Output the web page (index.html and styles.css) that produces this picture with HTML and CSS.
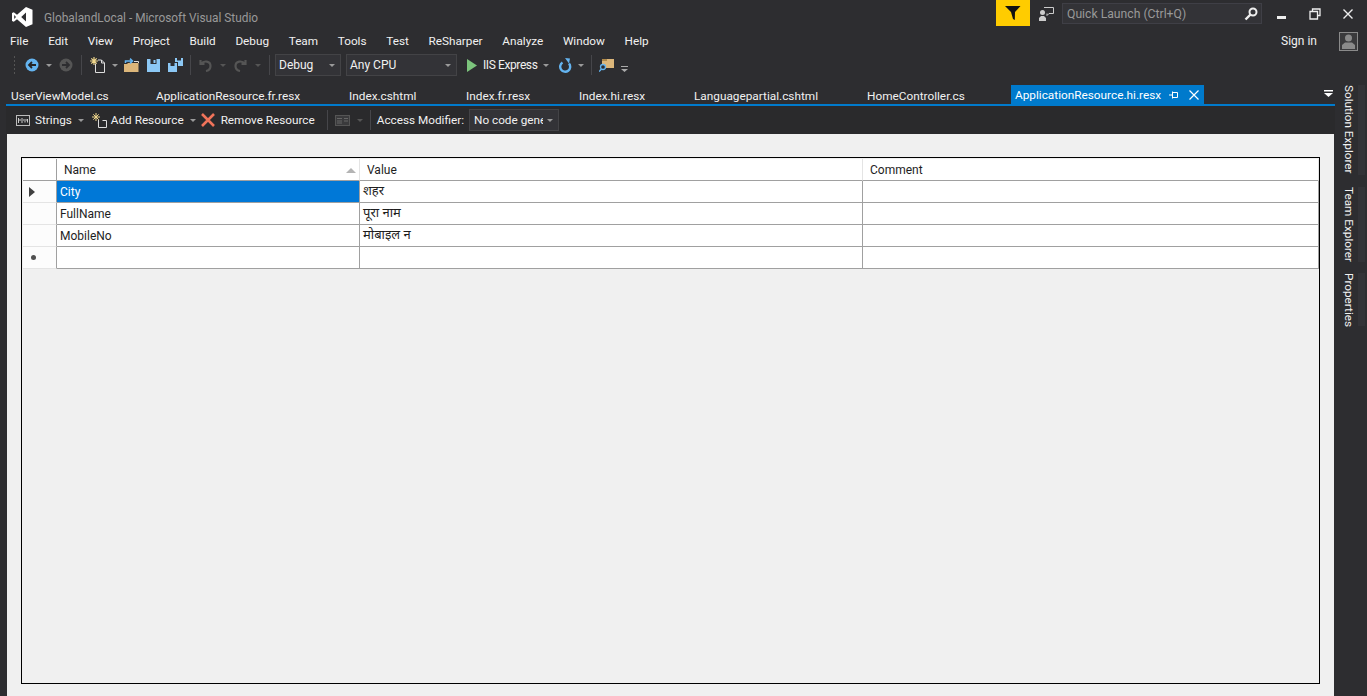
FILE: index.html
```html
<!DOCTYPE html>
<html lang="en">
<head>
<meta charset="utf-8">
<title>GlobalandLocal - Microsoft Visual Studio</title>
<link rel="stylesheet" href="styles.css">
</head>
<body>
<div class="app">
  <header class="titlebar">
    <svg class="logo" width="21" height="20" viewBox="0 0 21 20"><path fill="#fff" d="M14 0l6.500 2.800v14.400L14 20 5 12.300 1.800 14.800 0 13.900V6.100l1.800-.9L5 7.700zM14 5.400L9.200 10l4.800 4.600zM2.200 8v4L4 10z"/></svg>
    <span class="app-title">GlobalandLocal - Microsoft Visual Studio</span>
    <div class="title-right">
      <div class="filter-btn"><svg width="16" height="16" viewBox="0 0 16 16"><path fill="#111" d="M0 1h15.500L10 7l-.2 8L8 14 6 7z"/></svg></div>
      <svg class="feedback" width="16" height="16" viewBox="0 0 16 16"><circle cx="4.500" cy="6.500" r="2.500" fill="#ccc"/><path fill="#ccc" d="M1 15v-3l2-2h3l2 2v3z"/><path fill="none" stroke="#ccc" d="M6 1.500h9.500v6H11l-2 2v-2"/></svg>
      <div class="quick">
        <span>Quick Launch (Ctrl+Q)</span>
        <svg width="14" height="14" viewBox="0 0 14 14"><circle cx="9" cy="5" r="3.500" fill="none" stroke="#eee" stroke-width="2"/><path stroke="#eee" stroke-width="2.400" d="M6.500 7.500L1.500 12.500"/></svg>
      </div>
      <div class="win-btns">
        <svg width="12" height="12" viewBox="0 0 12 12"><rect x="1" y="8" width="9" height="3" fill="#eee"/></svg>
        <svg width="12" height="12" viewBox="0 0 12 12"><path fill="none" stroke="#eee" stroke-width="1.300" d="M3.500 3V1h7.500v6.500H8.500M1 3.500h7.500V11H1z"/></svg>
        <svg width="12" height="12" viewBox="0 0 12 12"><path stroke="#eee" stroke-width="1.400" d="M1.500 1.500l9 9M10.500 1.500l-9 9"/></svg>
      </div>
    </div>
  </header>

  <nav class="menubar">
    <span>File</span><span>Edit</span><span>View</span><span>Project</span><span>Build</span><span>Debug</span><span>Team</span><span>Tools</span><span>Test</span><span>ReSharper</span><span>Analyze</span><span>Window</span><span>Help</span>
    <div class="signin">
      <span>Sign in</span>
      <div class="avatar"><svg width="17" height="17" viewBox="0 0 17 17"><circle cx="8.500" cy="5" r="3.500" fill="#8a8a8a"/><path fill="#8a8a8a" d="M2 16v-4l3-2.500h7l3 2.500v4z"/></svg></div>
    </div>
  </nav>

  <div class="toolbar">
    <div class="grip"></div>
    <svg class="ic-back" width="14" height="14" viewBox="0 0 14 14"><circle cx="7" cy="7" r="6.500" fill="#64b4f0"/><path fill="none" stroke="#252526" stroke-width="1.800" d="M11 7H4.500M7 4L4 7l3 3"/></svg>
    <i class="caret"></i>
    <svg class="ic-fwd" width="14" height="14" viewBox="0 0 14 14"><circle cx="7" cy="7" r="6.500" fill="#555"/><path fill="none" stroke="#2d2d30" stroke-width="1.800" d="M3 7h6.500M7 4l3 3-3 3"/></svg>
    <div class="sep s1"></div>
    <svg class="ic-new" width="15" height="16" viewBox="0 0 15 16"><path fill="none" stroke="#ddd" d="M5.500 6.500v9h9V6l-3-3H8M11.500 3v3h3"/><path stroke="#f0d78c" stroke-width="1.200" d="M4 0v8M0 4h8M1.300 1.300l5.400 5.400M6.700 1.300L1.300 6.700"/></svg>
    <i class="caret"></i>
    <svg class="ic-open" width="15" height="14" viewBox="0 0 15 14"><path fill="#dcb67a" d="M0 6h3l1-1h10.500v9H0z"/><path fill="none" stroke="#64b4f0" stroke-width="1.500" d="M1.500 5V3h6M6 .6L8.500 3 6 5.400"/><path fill="none" stroke="#ddd" d="M10 3.500h4.500V5"/></svg>
    <svg class="ic-save" width="13" height="13" viewBox="0 0 13 13"><path fill="#8cc8f5" d="M0 0h13v13H0z"/><path fill="#2d2d30" d="M3.500 0h6v5h-6z"/><path fill="#8cc8f5" d="M6.500 1h2v3h-2z"/></svg>
    <svg class="ic-saveall" width="15" height="14" viewBox="0 0 15 14"><path fill="#8cc8f5" d="M0 5h9v9H0z"/><path fill="#2d2d30" d="M2.500 5h4v3h-4z"/><path fill="#8cc8f5" d="M7 0h8v8h-5V4H7z"/><path fill="#2d2d30" d="M9 0h4v2.500H9z"/></svg>
    <div class="sep s2"></div>
    <svg class="ic-undo" width="13" height="14" viewBox="0 0 13 14"><path fill="none" stroke="#555" stroke-width="2.200" d="M1.500 2v4h4M2 6c3-4 9.500-3 9.500 2 0 3-2 4.500-4.500 5"/></svg>
    <i class="caret dim"></i>
    <svg class="ic-redo" width="13" height="14" viewBox="0 0 13 14"><path fill="none" stroke="#555" stroke-width="2.200" d="M11.500 2v4h-4M11 6C8 2 1.500 3 1.500 8c0 3 2 4.500 4.500 5"/></svg>
    <i class="caret dim"></i>
    <div class="sep s3"></div>
    <div class="combo debug"><span>Debug</span><i class="caret"></i></div>
    <div class="combo cpu"><span>Any CPU</span><i class="caret"></i></div>
    <svg class="ic-play" width="10" height="13" viewBox="0 0 10 13"><path fill="#7cc47c" d="M0 0l10 6.500L0 13z"/></svg>
    <span class="tb-label">IIS Express</span>
    <i class="caret"></i>
    <svg class="ic-refresh" width="14" height="15" viewBox="0 0 14 15"><path fill="none" stroke="#64b4f0" stroke-width="2.400" d="M4.500 4.500A5 5 0 1 0 11 5.500"/><path fill="#64b4f0" d="M7 0l5 .5-1 5z"/></svg>
    <i class="caret"></i>
    <div class="sep s4"></div>
    <svg class="ic-find" width="15" height="14" viewBox="0 0 15 14"><path fill="#dcb67a" d="M3 1h12v9H7L3 6z"/><path fill="#b08a4a" d="M3 1h5v2H3z"/><circle cx="4" cy="9" r="2.500" fill="#2d2d30" stroke="#64b4f0" stroke-width="1.300"/><path stroke="#64b4f0" stroke-width="1.500" d="M2.500 11L0 13.500"/></svg>
    <svg class="ic-more" width="7" height="6" viewBox="0 0 7 6"><path fill="#aaa" d="M0 0h7v1H0zM0 3h7L3.500 6z"/></svg>
  </div>

  <div class="workspace">
    <div class="left">
      <div class="tabs">
        <span>UserViewModel.cs</span><span>ApplicationResource.fr.resx</span><span>Index.cshtml</span><span>Index.fr.resx</span><span>Index.hi.resx</span><span>Languagepartial.cshtml</span><span>HomeController.cs</span>
        <div class="tab-active">
          <span>ApplicationResource.hi.resx</span>
          <svg class="pin" width="10" height="9" viewBox="0 0 10 9"><path fill="none" stroke="#fff" d="M3.500 1.500h5v5h-5zM3.500 .5v7M0 4h3.500"/></svg>
          <svg class="tab-close" width="10" height="10" viewBox="0 0 10 10"><path stroke="#fff" stroke-width="1.200" d="M.5 .5l9 9M9.500 .5l-9 9"/></svg>
        </div>
        <svg class="tab-menu" width="9" height="7" viewBox="0 0 9 7"><path fill="#fff" d="M0 0h9v1.500H0zM0 3h9L4.500 7z"/></svg>
      </div>
      <main class="doc">
        <div class="doc-toolbar">
          <svg class="ic-abc" width="14" height="11" viewBox="0 0 14 11"><rect x=".5" y=".5" width="13" height="10" fill="none" stroke="#bbb"/><path stroke="#ccc" d="M2.500 3v5M6 3v5M9 4v3.500M11.500 4v3.500M3 5h2M7 5h1M10 5h1"/></svg>
          <span class="dt-label">Strings</span>
          <i class="caret"></i>
          <svg class="ic-add" width="15" height="15" viewBox="0 0 15 15"><path fill="none" stroke="#ddd" d="M6.500 6.500v8h8V7.500h-4"/><path stroke="#f0d78c" d="M4 0v8M0 4h8M1.300 1.300l5.400 5.400M6.700 1.300L1.300 6.700"/></svg>
          <span class="dt-label">Add Resource</span>
          <i class="caret"></i>
          <svg class="ic-remove" width="14" height="14" viewBox="0 0 14 14"><path stroke="#f0735a" stroke-width="2.600" d="M1 1l12 12M13 1L1 13"/></svg>
          <span class="dt-label">Remove Resource</span>
          <div class="sep s5"></div>
          <svg class="ic-view" width="15" height="11" viewBox="0 0 15 11"><rect x=".5" y=".5" width="14" height="10" fill="#3a3a3c" stroke="#555"/><path stroke="#666" d="M2 3.500h5M9 3.500h4M2 6h5M9 6h4M2 8h5"/></svg>
          <i class="caret dim"></i>
          <div class="sep s6"></div>
          <span class="dt-label access">Access Modifier:</span>
          <div class="combo code"><span class="clip">No code generation</span><i class="caret"></i></div>
        </div>
        <div class="content">
          <div class="grid-frame">
            <div class="grid">
              <div class="cell rowh head"></div>
              <div class="cell head name-head"><span>Name</span><i class="sort"></i></div>
              <div class="cell head">Value</div>
              <div class="cell head">Comment</div>

              <div class="cell rowh"><i class="row-arrow"></i></div>
              <div class="cell sel">City</div>
              <div class="cell hi">शहर</div>
              <div class="cell"></div>

              <div class="cell rowh"></div>
              <div class="cell">FullName</div>
              <div class="cell hi">पूरा नाम</div>
              <div class="cell"></div>

              <div class="cell rowh"></div>
              <div class="cell">MobileNo</div>
              <div class="cell hi">मोबाइल न</div>
              <div class="cell"></div>

              <div class="cell rowh"><i class="row-new"></i></div>
              <div class="cell"></div>
              <div class="cell"></div>
              <div class="cell"></div>
            </div>
          </div>
        </div>
      </main>
    </div>
    <aside class="rail">
      <div class="rail-tab solution">Solution Explorer</div>
      <div class="rail-tab team">Team Explorer</div>
      <div class="rail-tab props">Properties</div>
    </aside>
  </div>
</div>
</body>
</html>
```

FILE: styles.css
```css
* { box-sizing: border-box; }
html, body { margin: 0; height: 100%; overflow: hidden; }
body { background: #2d2d30; color: #f1f1f1; font: 12px/16px Roboto, "Noto Sans", "Noto Sans Devanagari", sans-serif; }
.app { height: 696px; display: flex; flex-direction: column; }
svg { display: block; flex: none; }

.titlebar { height: 28px; display: flex; align-items: flex-start; flex: none; }
.logo { margin: 7px 0 0 12px; }
.app-title { margin: 10px 0 0 11px; color: #999; font-size: 11.85px; }
.title-right { margin-left: auto; display: flex; align-items: flex-start; }
.filter-btn { width: 34px; height: 26px; background: #ffcc00; display: flex; align-items: center; justify-content: center; }
.feedback { margin: 6px 0 0 8px; }
.quick { width: 200px; height: 21px; margin: 3px 0 0 8px; padding: 0 3px 0 4px; background: #333337; border: 1px solid #3f3f46; display: flex; align-items: center; justify-content: space-between; color: #999; font-size: 12.2px; }
.win-btns { display: flex; gap: 21px; margin: 8px 0 0 14px; padding-right: 13px; }

.menubar { height: 26px; display: flex; align-items: center; gap: 19.7px; padding-left: 10px; flex: none; font-size: 11.75px; }
.signin { margin-left: auto; display: flex; align-items: center; gap: 22px; padding-right: 9px; font-size: 12px; }
.avatar { width: 19px; height: 19px; border: 1px solid #8a8a8a; background: #3a3a3c; display: flex; align-items: flex-end; justify-content: center; }

.toolbar { height: 22px; display: flex; align-items: center; flex: none; padding-left: 13px; }
.grip { width: 3px; height: 20px; background-image: radial-gradient(#555 .6px, transparent .7px); background-size: 3px 4px; }
.caret { display: block; flex: none; width: 0; height: 0; border: 3px solid transparent; border-top-color: #9a9a9a; border-bottom: 0; }
.caret.dim { border-top-color: #555; }
.sep { width: 1px; height: 20px; background: #46464a; flex: none; }
.ic-back { margin-left: 9px; }
.ic-back + .caret { margin-left: 7px; }
.ic-fwd { margin-left: 7px; }
.s1 { margin-left: 8px; }
.ic-new { margin-left: 8px; }
.ic-new + .caret { margin-left: 7px; }
.ic-open { margin-left: 6px; }
.ic-save { margin-left: 8px; }
.ic-saveall { margin-left: 8px; }
.s2 { margin-left: 7px; }
.ic-undo { margin-left: 8px; }
.ic-undo + .caret { margin-left: 8px; }
.ic-redo { margin-left: 8px; }
.ic-redo + .caret { margin-left: 8px; }
.s3 { margin-left: 8px; }
.combo { height: 22px; border: 1px solid #434346; background: #333337; display: flex; align-items: center; justify-content: space-between; padding: 0 5px 0 3px; flex: none; }
.debug { width: 66px; margin-left: 5px; }
.cpu { width: 111px; margin-left: 5px; }
.ic-play { margin-left: 10px; }
.tb-label { margin-left: 6px; letter-spacing: -.4px; }
.tb-label + .caret { margin-left: 6px; }
.ic-refresh { margin-left: 9px; }
.ic-refresh + .caret { margin-left: 6px; }
.s4 { margin-left: 7px; }
.ic-find { margin-left: 7px; }
.ic-more { margin: 8px 0 0 7px; }

.workspace { flex: 1; display: flex; min-height: 0; }
.left { width: 1335px; flex: none; display: flex; flex-direction: column; }

.tabs { height: 28px; padding: 9px 2px 0 11px; display: grid; grid-template-columns: 145px 193px 117px 113px 115px 173px 144px 193px 1fr; align-items: start; flex: none; font-size: 11.8px; }
.tabs > span { line-height: 22px; white-space: nowrap; }
.tab-active { height: 19px; padding: 1px 5px 0 4px; background: #007acc; color: #fff; display: flex; align-items: center; white-space: nowrap; }
.tab-active .pin { margin-left: auto; }
.tab-active .tab-close { margin-left: 10px; }
.tab-menu { margin-top: 5px; justify-self: end; }

.doc { flex: 1; min-height: 0; margin-left: 6px; border-top: 2px solid #007acc; display: flex; flex-direction: column; }
.doc-toolbar { height: 28px; background: #2a2a2c; display: flex; align-items: center; padding-left: 10px; flex: none; font-size: 11.75px; }
.ic-abc { margin-right: 5px; }
.dt-label + .caret { margin-left: 6px; }
.ic-add { margin-left: 8px; margin-right: 4px; }
.ic-remove { margin-left: 5px; margin-right: 6px; }
.s5 { margin-left: 12px; }
.ic-view { margin-left: 7px; }
.ic-view + .caret { margin-left: 7px; }
.s6 { margin-left: 7px; }
.access { margin-left: 6px; }
.code { width: 90px; margin-left: 5px; padding-left: 4px; padding-right: 5px; }
.clip { width: 69px; overflow: hidden; white-space: nowrap; }

.content { flex: 1; background: #f0f0f0; margin: 0 1px; padding: 23px 14px 12px; min-height: 0; }
.grid-frame { height: 100%; border: 1px solid #000; padding: 1px 0 0 1px; }
.grid { display: grid; grid-template-columns: 34px 303px 503px 456px; grid-auto-rows: 22px; color: #1e1e1e; }
.cell { background: #fff; border-right: 1px solid #a0a0a0; border-bottom: 1px solid #a0a0a0; padding: 0 3px; display: flex; align-items: center; white-space: nowrap; overflow: hidden; }
.head { border-right-color: #e4e4e4; padding-left: 7px; }
.rowh { background: #fcfcfc; padding: 0 0 0 6px; border-right-color: #a0a0a0; border-bottom-color: #e4e4e4; }
.head.rowh { background: #fff; border-bottom-color: #a0a0a0; }
.name-head { justify-content: space-between; }
.sort { width: 0; height: 0; border: 5px solid transparent; border-top: 0; border-bottom-color: #b4b4b4; margin-top: 2px; }
.sel { background: #0078d7; color: #fff; }
.hi { font-family: "Noto Sans Devanagari", "Noto Sans", sans-serif; font-size: 13px; }
.row-arrow { width: 0; height: 0; border: 5px solid transparent; border-left: 6px solid #404040; border-right: 0; }
.row-new { width: 5px; height: 5px; margin-left: 2px; border-radius: 50%; background: #505050; }

.rail { flex: 1; padding-top: 9px; font-size: 11.75px; }
.rail-tab { writing-mode: vertical-rl; white-space: nowrap; padding-left: 5px; border-right: 7px solid #333337; line-height: 18px; }
.solution { height: 90px; }
.team { height: 75px; margin-top: 12px; }
.props { height: 53px; margin-top: 11px; }
```
